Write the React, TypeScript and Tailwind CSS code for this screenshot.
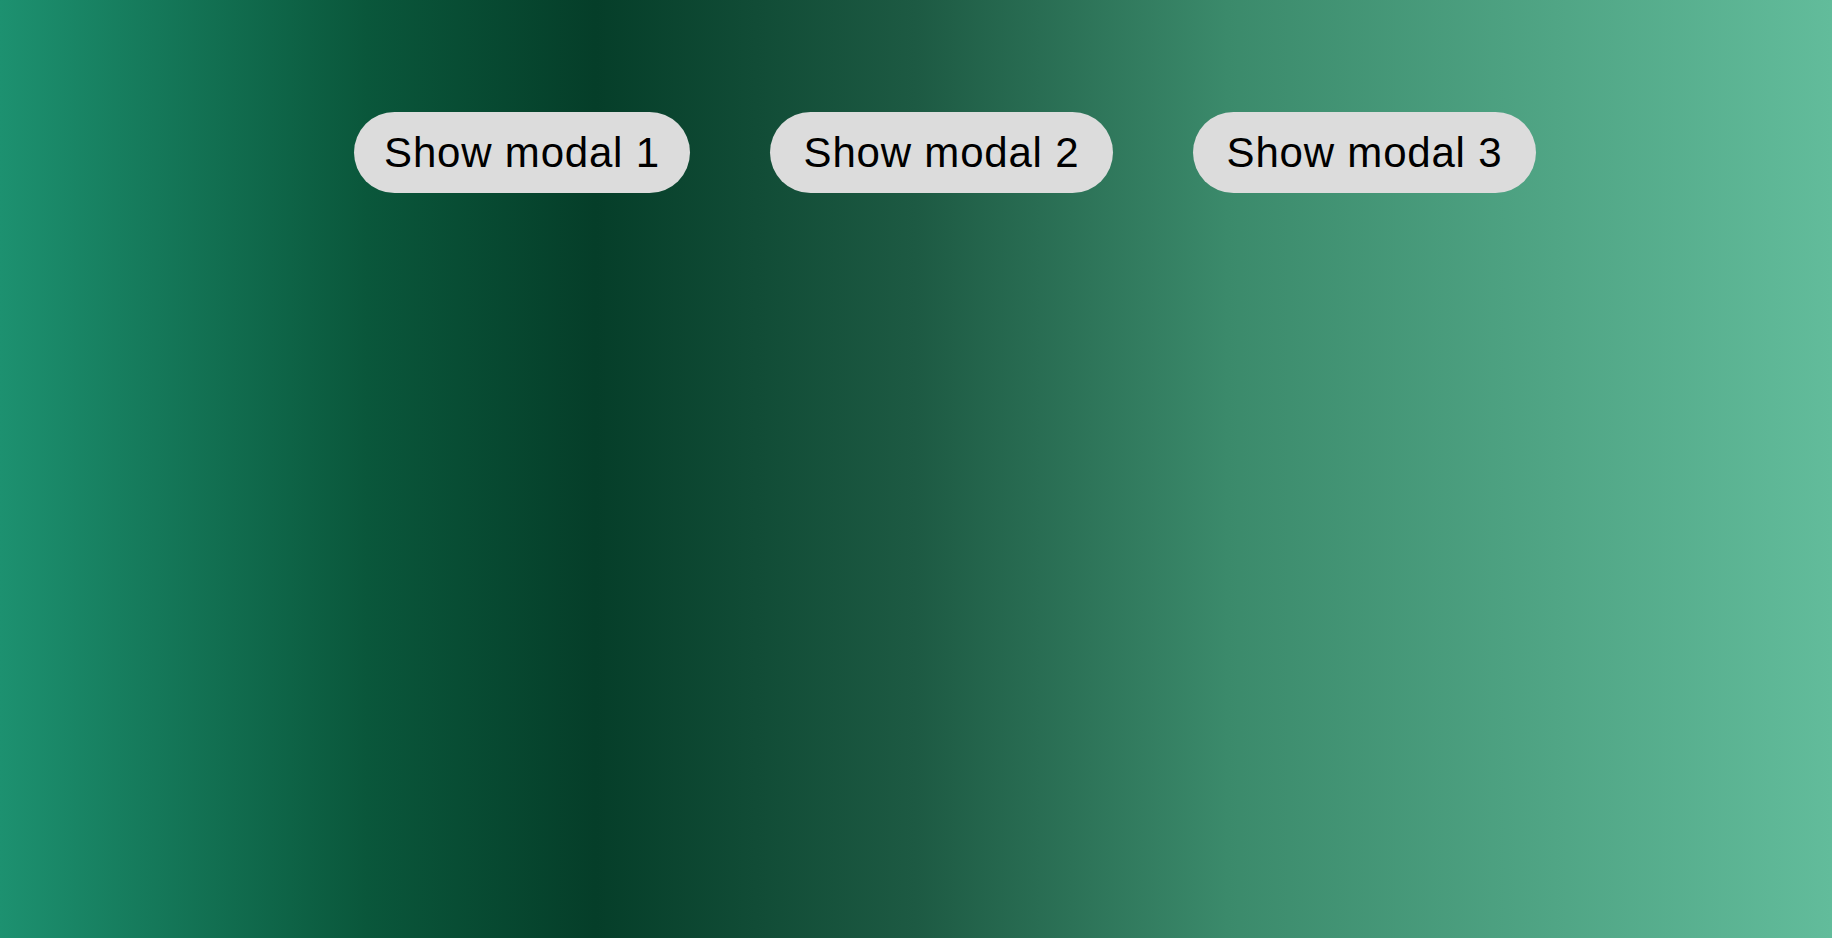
const buttons = [
  { label: 'Show modal 1', width: 'w-[336px]' },
  { label: 'Show modal 2', width: 'w-[343px]' },
  { label: 'Show modal 3', width: 'w-[343px]' },
];

export default function App() {
  return (
    <div className="h-[938px] w-full bg-[linear-gradient(90deg,#1d9170_0%,#0a573b_20%,#053e29_32.5%,#1d5a43_50%,#3b8a6b_67%,#62bc9b_100%)]">
      <div className="flex items-start gap-[80px] pl-[354px] pt-[112px]">
        {buttons.map((b) => (
          <button
            key={b.label}
            className={`${b.width} h-[81px] rounded-full bg-[#dcdcdc] text-center text-[42px] leading-none tracking-[0.8px] text-black font-['Liberation_Sans',Arial,sans-serif]`}
          >
            {b.label}
          </button>
        ))}
      </div>
    </div>
  );
}
